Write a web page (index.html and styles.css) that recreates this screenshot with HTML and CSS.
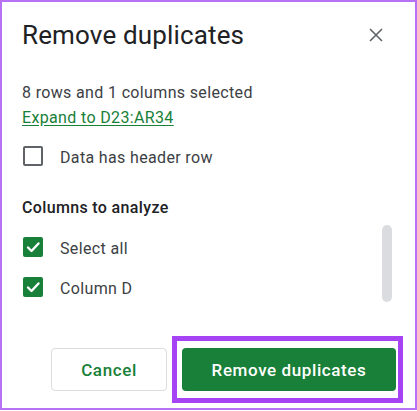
FILE: index.html
```html
<!DOCTYPE html>
<html lang="en">
<head>
  <meta charset="UTF-8">
  <meta name="viewport" content="width=device-width, initial-scale=1.0">
  <title>Remove duplicates</title>
  <link rel="stylesheet" href="styles.css">
</head>
<body>
  <div class="dialog">
    <header class="dialog-head">
      <h1>Remove duplicates</h1>
      <button class="close-btn" aria-label="Close">
        <svg width="14" height="14" viewBox="0 0 14 14"><path d="M1 1L13 13M13 1L1 13" stroke="#5f6368" stroke-width="1.6" fill="none"/></svg>
      </button>
    </header>

    <div class="selection">
      <div>8 rows and 1 columns selected</div>
      <a href="#" class="expand-link">Expand to D23:AR34</a>
    </div>

    <label class="check-row header-row">
      <span class="box"></span>
      <span class="check-label">Data has header row</span>
    </label>

    <h2 class="section-title">Columns to analyze</h2>

    <div class="columns">
      <div class="column-list">
        <label class="check-row">
          <span class="box checked">
            <svg width="20" height="20" viewBox="0 0 20 20"><path d="M5 10.5L8.5 14L15.5 6.5" stroke="#fff" stroke-width="2.4" fill="none" stroke-linecap="round" stroke-linejoin="round"/></svg>
          </span>
          <span class="check-label">Select all</span>
        </label>
        <label class="check-row">
          <span class="box checked">
            <svg width="20" height="20" viewBox="0 0 20 20"><path d="M5 10.5L8.5 14L15.5 6.5" stroke="#fff" stroke-width="2.4" fill="none" stroke-linecap="round" stroke-linejoin="round"/></svg>
          </span>
          <span class="check-label">Column D</span>
        </label>
      </div>
      <div class="scroll-thumb"></div>
    </div>

    <footer class="dialog-foot">
      <button class="btn btn-cancel">Cancel</button>
      <button class="btn btn-primary">Remove duplicates</button>
    </footer>

    <div class="highlight"></div>
  </div>
</body>
</html>
```

FILE: styles.css
```css
:root {
  --green: #188038;
  --text: #3c4043;
  --title: #202124;
  --frame: #b771f5;
  --mark: #a543f5;
}
*, *::before, *::after { box-sizing: border-box; }
body {
  margin: 0;
  background: #fff;
  font-family: Roboto, "Liberation Sans", sans-serif;
  color: var(--text);
}
.dialog {
  position: relative;
  width: 417px;
  height: 410px;
  border: 2px solid var(--frame);
  padding: 17px 19px 0 20px;
  display: flex;
  flex-direction: column;
}
.dialog-head {
  display: flex;
  justify-content: space-between;
  align-items: center;
  height: 32px;
}
h1 {
  margin: 0;
  font-size: 26px;
  line-height: 32px;
  font-weight: 400;
  letter-spacing: 0.15px;
  color: var(--title);
}
.close-btn {
  width: 24px;
  height: 24px;
  border: none;
  background: none;
  padding: 0;
  margin-right: 8px;
  display: flex;
  align-items: center;
  justify-content: center;
  cursor: pointer;
}
.selection {
  margin-top: 29px;
  font-size: 16px;
  line-height: 25px;
  letter-spacing: 0.35px;
}
.expand-link {
  color: var(--green);
  text-decoration: underline;
  text-underline-offset: 2px;
}
.check-row {
  display: flex;
  align-items: flex-start;
  gap: 17px;
  height: 20px;
  margin-left: 1px;
}
.header-row { margin-top: 16px; }
.box {
  width: 20px;
  height: 20px;
  border: 2px solid #5f6368;
  border-radius: 2px;
  flex-shrink: 0;
}
.box.checked {
  border: none;
  background: var(--green);
  border-radius: 2px;
}
.box svg { display: block; }
.check-label {
  font-size: 16px;
  line-height: 20px;
  margin-top: 2px;
  letter-spacing: 0.35px;
}
.section-title {
  margin: 30px 0 0;
  font-size: 16px;
  line-height: 24px;
  font-weight: 500;
  letter-spacing: 0.35px;
  color: var(--title);
}
.columns {
  display: flex;
  justify-content: space-between;
  margin-top: 5px;
  height: 77px;
}
.column-list {
  padding-top: 12px;
  display: flex;
  flex-direction: column;
  gap: 20px;
}
.scroll-thumb {
  width: 10px;
  height: 77px;
  background: #dadce0;
  border-radius: 5px;
  margin-right: 4px;
}
.dialog-foot {
  margin-top: 46px;
  display: flex;
  justify-content: flex-end;
  gap: 15px;
}
.btn {
  height: 43px;
  border-radius: 4px;
  font-family: inherit;
  font-size: 17px;
  font-weight: 500;
  letter-spacing: 0.6px;
  cursor: pointer;
}
.btn-cancel {
  width: 116px;
  background: #fff;
  color: var(--green);
  border: 1px solid #dadce0;
}
.btn-primary {
  width: 214px;
  background: var(--green);
  color: #fff;
  border: none;
}
.highlight {
  position: absolute;
  left: 170px;
  top: 334px;
  width: 231px;
  height: 67px;
  border: 5px solid var(--mark);
  pointer-events: none;
}
```
